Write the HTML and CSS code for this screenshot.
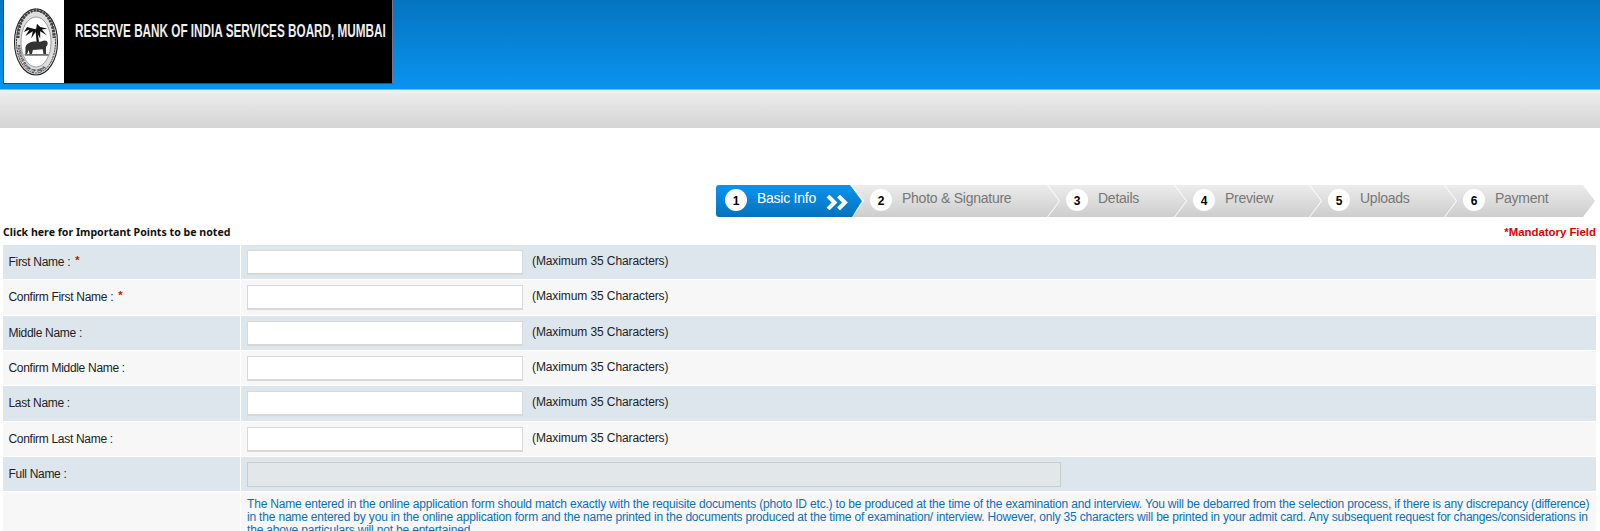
FILE: index.html
```html
<!DOCTYPE html>
<html lang="en">
<head>
    <meta charset="UTF-8">
    <title>Reserve Bank of India Services Board, Mumbai</title>
    <link rel="stylesheet" href="styles.css">
</head>
<body>
    <div class="header">
        <div class="banner">
            <div class="seal-box">
                <svg class="seal" viewBox="0 0 60 80" width="60" height="80">
                    <defs>
                        <path id="seal-bottom" d="M11.5 40 A18.5 30 0 0 0 48.5 40"></path>
                    </defs>
                    <ellipse cx="30" cy="40" rx="21.5" ry="33" fill="#ddd" stroke="#222" stroke-width="1.1"></ellipse>
                    <ellipse cx="30" cy="40" rx="19.5" ry="31" fill="none" stroke="#333" stroke-width="1" stroke-dasharray="2 0.8"></ellipse>
                    <path d="M12 36 A18 28 0 0 1 48 36" fill="none" stroke="#444" stroke-width="3" stroke-dasharray="2.4 1"></path>
                    <ellipse cx="30" cy="40" rx="15" ry="25" fill="#fff" stroke="#666" stroke-width="0.6"></ellipse>
                    <text class="seal-text"><textPath href="#seal-bottom" startOffset="4%">RESERVE BANK OF INDIA</textPath></text>
                    <g transform="translate(5.5 7) scale(0.82)">
                        <path d="M31 43 L29 24 L31 24 L34 43 Z" fill="#111"></path>
                        <path d="M30 25 L19 22 L15 28 L22 25 L17 33 L26 27 L24 36 L30 27 L35 36 L35 27 L43 32 L37 25 L44 24 L35 22 L31 18 Z" fill="#111"></path>
                        <path d="M17 47 C18 41 26 39 33 40 C37 40 40 37 43 39 C45 41 44 45 42 46 L42 55 L39 55 L38 49 L26 50 L25 55 L22 55 L21 50 L19 55 L17 55 Z" fill="#333"></path>
                        <path d="M16 56 H45" stroke="#222" stroke-width="1.4"></path>
                    </g>
                </svg>
            </div>
            <div class="banner-title">RESERVE BANK OF INDIA SERVICES BOARD, MUMBAI</div>
        </div>
    </div>
    <div class="graybar"></div>

    <div class="steps">
        <div class="step active">
            <span class="num">1</span><span class="step-name">Basic Info</span>
            <svg class="chevrons" viewBox="0 0 23 15" width="23" height="15">
                <path d="M2 1 L8.5 7.5 L2 14 M12.5 1 L19 7.5 L12.5 14" fill="none" stroke="#fff" stroke-width="4"></path>
            </svg>
        </div>
        <div class="step s2"><span class="num">2</span><span class="step-name">Photo &amp; Signature</span></div>
        <div class="step s3"><span class="num">3</span><span class="step-name">Details</span></div>
        <div class="step s4"><span class="num">4</span><span class="step-name">Preview</span></div>
        <div class="step s5"><span class="num">5</span><span class="step-name">Uploads</span></div>
        <div class="step s6"><span class="num">6</span><span class="step-name">Payment</span></div>
    </div>

    <div class="notes">
        <a class="points">Click here for Important Points to be noted</a>
        <span class="mandatory">*Mandatory Field</span>
    </div>

    <div class="form">
        <div class="row blue">
            <div class="label">First Name : <sup class="req">*</sup></div>
            <div class="field"><input class="txt" type="text"><span class="hint">(Maximum 35 Characters)</span></div>
        </div>
        <div class="row">
            <div class="label">Confirm First Name : <sup class="req">*</sup></div>
            <div class="field"><input class="txt" type="text"><span class="hint">(Maximum 35 Characters)</span></div>
        </div>
        <div class="row blue">
            <div class="label">Middle Name :</div>
            <div class="field"><input class="txt" type="text"><span class="hint">(Maximum 35 Characters)</span></div>
        </div>
        <div class="row">
            <div class="label">Confirm Middle Name :</div>
            <div class="field"><input class="txt" type="text"><span class="hint">(Maximum 35 Characters)</span></div>
        </div>
        <div class="row blue">
            <div class="label">Last Name :</div>
            <div class="field"><input class="txt" type="text"><span class="hint">(Maximum 35 Characters)</span></div>
        </div>
        <div class="row">
            <div class="label">Confirm Last Name :</div>
            <div class="field"><input class="txt" type="text"><span class="hint">(Maximum 35 Characters)</span></div>
        </div>
        <div class="row blue">
            <div class="label">Full Name :</div>
            <div class="field"><input class="txt full" type="text" disabled></div>
        </div>
        <div class="row tall">
            <div class="label"></div>
            <div class="field">
                <p class="notice">The Name entered in the online application form should match exactly with the requisite documents (photo ID etc.) to be produced at the time of the examination and interview. You will be debarred from the selection process, if there is any discrepancy (difference)<br>in the name entered by you in the online application form and the name printed in the documents produced at the time of examination/ interview. However, only 35 characters will be printed in your admit card. Any subsequent request for changes/considerations in<br>the above particulars will not be entertained.</p>
            </div>
        </div>
    </div>
</body>
</html>
```

FILE: styles.css
```css
html, body {
    margin: 0;
    padding: 0;
    height: 531px;
    overflow: hidden;
    background: #fff;
    font-family: "Liberation Sans", Arial, sans-serif;
    font-size: 12px;
    color: #222;
}

/* top blue band */
.header {
    height: 89px;
    background: linear-gradient(to bottom, #0474c0 0%, #0a94f0 100%);
    border-bottom: 1px solid #6cc0f5;
    padding-left: 3px;
}
.banner {
    width: 390px;
    height: 84px;
    background: #000;
    border-right: 1px solid #778;
    border-bottom: 1px solid #445;
    box-sizing: border-box;
    display: flex;
    align-items: flex-start;
}
.seal-box {
    width: 61px;
    height: 83px;
    box-sizing: border-box;
    padding-left: 3px;
    background: #fff;
    border-left: 1px solid #445;
    display: flex;
    align-items: center;
    justify-content: center;
    flex: none;
}
.seal {
    flex: none;
}
.seal-text {
    font-size: 3.7px;
    font-weight: bold;
    fill: #222;
}
.banner-title {
    margin: 21px 0 0 11px;
    color: #eee;
    font-size: 18px;
    font-weight: bold;
    white-space: nowrap;
    transform: scaleX(0.652);
    transform-origin: left center;
}
.graybar {
    height: 38px;
    background: linear-gradient(to bottom, #eeeeee 0%, #d4d4d4 100%);
}

/* wizard */
.steps {
    display: flex;
    margin: 57px 0 0 716px;
    height: 32px;
}
.step {
    position: relative;
    display: flex;
    align-items: flex-start;
    height: 32px;
    box-sizing: border-box;
    padding: 4px 0 0 18px;
    background: linear-gradient(to bottom, #ececec 0%, #cdcdcd 100%);
    clip-path: polygon(0 0, calc(100% - 12px) 0, 100% 50%, calc(100% - 12px) 100%, 0 100%, 12px 50%);
    margin-right: -11px;
    color: #777;
    font-size: 14px;
    letter-spacing: -0.25px;
    flex: none;
}
.step.active {
    width: 146px;
    padding-left: 9px;
    margin-right: -10px;
    background: linear-gradient(to bottom, #0a94f0 0%, #0472bd 100%);
    clip-path: polygon(0 0, calc(100% - 12px) 0, 100% 50%, calc(100% - 10px) 100%, 0 100%);
    border-radius: 3px 0 0 3px;
    color: #fff;
    z-index: 2;
}
.s2 { width: 207px; }
.s3 { width: 138px; }
.s4 { width: 146px; }
.s5 { width: 146px; }
.s6 { width: 150px; }
.num {
    width: 22px;
    height: 22px;
    border-radius: 50%;
    background: #fff;
    color: #000;
    font-size: 12px;
    font-weight: bold;
    text-align: center;
    line-height: 24px;
    letter-spacing: 0;
    flex: none;
}
.step-name {
    margin: 1px 0 0 10px;
    line-height: 17px;
    white-space: nowrap;
}
.chevrons {
    position: absolute;
    left: 110px;
    top: 10px;
}

.notes {
    display: flex;
    justify-content: space-between;
    margin: 8px 4px 0 3px;
    height: 20px;
    line-height: 15px;
    font-weight: bold;
    font-size: 11.4px;
}
.points {
    color: #111;
    font-family: "Noto Sans", sans-serif;
    font-size: 10.6px;
}
.mandatory { color: #e00000; }

/* form rows */
.form {
    margin-left: 3px;
    margin-right: 4px;
    display: flex;
    flex-direction: column;
    gap: 1px;
}
.row {
    display: flex;
    height: 34.33px;
    background: #f7f7f7;
    gap: 1px;
}
.row.blue { background: #dee6ed; }
.label {
    width: 238px;
    flex: none;
    box-sizing: border-box;
    padding: 10px 0 0 5.5px;
    line-height: 14px;
    letter-spacing: -0.3px;
    background: inherit;
    border-right: 1px solid #fff;
}
.req {
    color: #d00;
    font-size: 11px;
    font-weight: bold;
    line-height: 0;
    vertical-align: 2px;
    margin-left: 2px;
}
.field {
    flex: 1;
    padding: 5px 0 0 5px;
    display: flex;
    align-items: flex-start;
}
.txt {
    width: 276px;
    height: 25px;
    box-sizing: border-box;
    border: 1px solid #d8d8d8;
    border-bottom-width: 2px;
    background: #fff;
    padding: 0;
    margin: 0;
    flex: none;
}
.txt.full {
    width: 814px;
    background: #e2e7ea;
    border: 1px solid #c8cccc;
}
.hint {
    margin: 4px 0 0 9px;
    line-height: 14px;
    letter-spacing: -0.1px;
}
.notice {
    margin: 0;
    padding-top: 1px;
    color: #0a70ba;
    line-height: 13px;
    letter-spacing: -0.185px;
    white-space: nowrap;
}
.row.tall { height: 60px; }
```
